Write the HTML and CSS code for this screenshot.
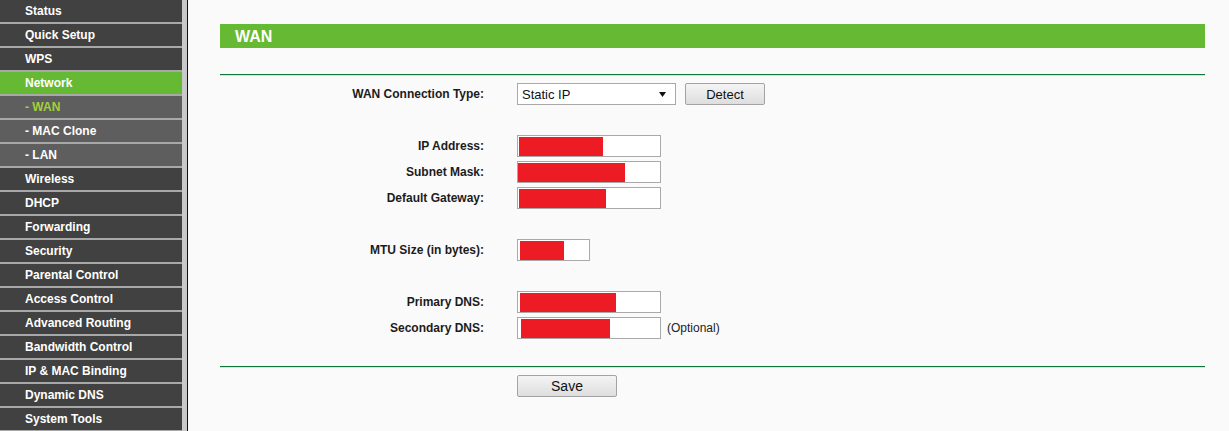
FILE: index.html
```html
<!DOCTYPE html>
<html>
<head>
<meta charset="utf-8">
<link rel="stylesheet" href="styles.css">
</head>
<body>
<nav class="sidebar">
  <div class="nav-item">Status</div>
  <div class="nav-item">Quick Setup</div>
  <div class="nav-item">WPS</div>
  <div class="nav-item active">Network</div>
  <div class="nav-item sub current">- WAN</div>
  <div class="nav-item sub">- MAC Clone</div>
  <div class="nav-item sub">- LAN</div>
  <div class="nav-item">Wireless</div>
  <div class="nav-item">DHCP</div>
  <div class="nav-item">Forwarding</div>
  <div class="nav-item">Security</div>
  <div class="nav-item">Parental Control</div>
  <div class="nav-item">Access Control</div>
  <div class="nav-item">Advanced Routing</div>
  <div class="nav-item">Bandwidth Control</div>
  <div class="nav-item">IP &amp; MAC Binding</div>
  <div class="nav-item">Dynamic DNS</div>
  <div class="nav-item">System Tools</div>
</nav>
<div class="rail"></div>
<main class="main">
  <div class="title">WAN</div>
  <div class="rule"></div>
  <div class="form">
    <div class="group">
      <div class="row">
        <label class="label">WAN Connection Type:</label>
        <div class="field">
          <div class="select"><span>Static IP</span><svg class="caret" width="7" height="5" viewBox="0 0 7 5"><path d="M0 0H7L3.5 5Z" fill="#111"/></svg></div>
          <button class="btn detect">Detect</button>
        </div>
      </div>
    </div>
    <div class="group">
      <div class="row">
        <label class="label">IP Address:</label>
        <div class="field"><div class="input"><span class="fill" style="margin-left:1px;width:84px"></span></div></div>
      </div>
      <div class="row">
        <label class="label">Subnet Mask:</label>
        <div class="field"><div class="input"><span class="fill" style="margin-left:0px;width:107px"></span></div></div>
      </div>
      <div class="row">
        <label class="label">Default Gateway:</label>
        <div class="field"><div class="input"><span class="fill" style="margin-left:1px;width:87px"></span></div></div>
      </div>
    </div>
    <div class="group">
      <div class="row">
        <label class="label">MTU Size (in bytes):</label>
        <div class="field"><div class="input short"><span class="fill" style="margin-left:2px;width:44px"></span></div></div>
      </div>
    </div>
    <div class="group">
      <div class="row">
        <label class="label">Primary DNS:</label>
        <div class="field"><div class="input"><span class="fill" style="margin-left:2px;width:96px"></span></div></div>
      </div>
      <div class="row">
        <label class="label">Secondary DNS:</label>
        <div class="field"><div class="input"><span class="fill" style="margin-left:3px;width:89px"></span></div><span class="note">(Optional)</span></div>
      </div>
    </div>
  </div>
  <div class="rule bottom"></div>
  <div class="actions">
    <button class="btn save">Save</button>
  </div>
</main>
</body>
</html>
```

FILE: styles.css
```css
html, body {
  margin: 0;
  padding: 0;
}
body {
  display: flex;
  height: 431px;
  overflow: hidden;
  background: #fafafa;
  font-family: "Liberation Sans", Arial, sans-serif;
  color: #1c1c1c;
}
.sidebar {
  width: 182px;
  flex: none;
  display: flex;
  flex-direction: column;
  gap: 2px;
  background: #a8a8a8;
  align-self: flex-start;
  padding-bottom: 2px;
}
.nav-item {
  height: 22px;
  line-height: 22px;
  background: #414141;
  color: #fff;
  font-size: 12px;
  font-weight: bold;
  padding-left: 25px;
  white-space: nowrap;
}
.nav-item.active {
  background: #66b933;
}
.nav-item.sub {
  background: #5e5e5e;
}
.nav-item.current {
  color: #a2d13a;
}
.rail {
  width: 5px;
  flex: none;
  background: #c9c9c9;
  border-right: 1px solid #111;
}
.main {
  flex: 1;
  padding: 24px 24px 0 32px;
}
.title {
  height: 24px;
  line-height: 25px;
  background: #66b933;
  color: #fff;
  font-size: 16px;
  font-weight: bold;
  padding-left: 15px;
}
.rule {
  height: 1px;
  background: #12763a;
  box-shadow: 0 1px 0 #d5e3d8;
  margin-top: 26px;
}
.form {
  margin-top: 8px;
  display: flex;
  flex-direction: column;
  gap: 30px;
}
.group {
  display: flex;
  flex-direction: column;
  gap: 4px;
}
.row {
  display: grid;
  grid-template-columns: 264px 1fr;
  column-gap: 33px;
  height: 22px;
  align-items: center;
}
.label {
  text-align: right;
  font-size: 12px;
  font-weight: bold;
  color: #1c1c1c;
  line-height: 22px;
}
.field {
  display: flex;
  align-items: center;
  height: 22px;
}
.select {
  box-sizing: border-box;
  width: 159px;
  height: 22px;
  border: 1px solid #a9a9a9;
  background: #fff;
  display: flex;
  align-items: center;
  justify-content: space-between;
  padding: 0 9px 0 4px;
  font-size: 13px;
  color: #111;
}
.caret {
  display: block;
}
.btn {
  box-sizing: border-box;
  height: 22px;
  border: 1px solid #a3a3a3;
  border-radius: 2px;
  background: linear-gradient(#f4f4f4, #dedede);
  font-family: "Liberation Sans", Arial, sans-serif;
  color: #111;
  padding: 0;
}
.detect {
  width: 80px;
  margin-left: 9px;
  font-size: 13px;
}
.input {
  box-sizing: border-box;
  width: 144px;
  height: 22px;
  border: 1px solid #a9a9a9;
  background: #fff;
  display: flex;
  align-items: center;
}
.input.short {
  width: 73px;
}
.fill {
  display: block;
  height: 19px;
  background: #ed1c24;
}
.note {
  margin-left: 6px;
  font-size: 12px;
  color: #222;
}
.rule.bottom {
  margin-top: 27px;
}
.actions {
  margin-top: 8px;
  padding-left: 297px;
}
.save {
  width: 100px;
  font-size: 14px;
}
```
